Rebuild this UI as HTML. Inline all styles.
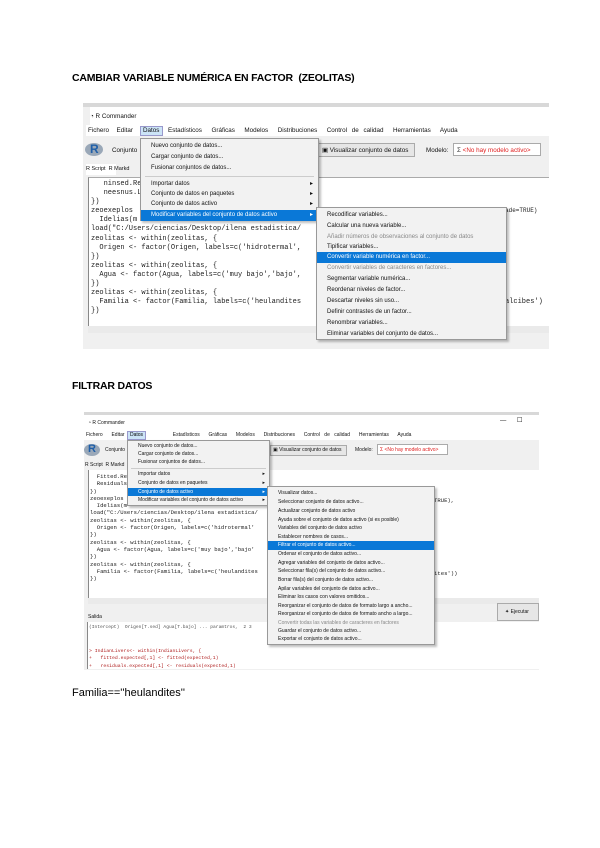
<!DOCTYPE html>
<html><head><meta charset="utf-8"><style>
*{margin:0;padding:0;box-sizing:border-box}
body{width:600px;height:848px;background:#fff;position:relative;overflow:hidden;font-family:"Liberation Sans",sans-serif;color:#000}
.a{position:absolute;white-space:nowrap}
.h{font-weight:bold;font-size:10.5px;letter-spacing:-0.2px}
.ui{font-size:6.3px;color:#111}
.mono{font-family:"Liberation Mono",monospace;font-size:7px;color:#222}
.menu{position:absolute;background:#f2f2f2;border:1px solid #999;box-shadow:2px 2px 2px rgba(0,0,0,.25)}
.menu div{position:absolute;left:0;right:0;height:10px;line-height:10px;padding-left:10px;font-size:6px;color:#111;white-space:nowrap}
.menu .sel{background:#0a78d7;color:#fff}
.menu .dis{color:#888}
.sep{height:1px!important;background:#ccc}
</style></head><body>

<div class="a h" style="left:72px;top:72px">CAMBIAR VARIABLE NUMÉRICA EN FACTOR&nbsp; (ZEOLITAS)</div>

<!-- screenshot 1 -->
<div class="a" style="left:83px;top:103px;width:466px;height:246px;background:#f0f0f0"></div>
<div class="a" style="left:83px;top:103px;width:466px;height:4px;background:#d8d8d8"></div>
<div class="a" style="left:90px;top:107px;width:459px;height:18px;background:#fff"></div>
<div class="a ui" style="left:90px;top:113px">◔ R Commander</div>
<div class="a" style="left:86px;top:125px;width:463px;height:11px;background:#fff"></div>
<div class="a ui" style="left:88px;top:127px;word-spacing:2px">Fichero&nbsp; Editar</div>
<div class="a" style="left:140px;top:126px;width:23px;height:10px;background:#cce4f7;border:1px solid #99c"></div>
<div class="a ui" style="left:143px;top:127px">Datos</div>
<div class="a ui" style="left:168px;top:127px;word-spacing:3px">Estadísticos&nbsp; Gráficas&nbsp; Modelos&nbsp; Distribuciones&nbsp; Control de calidad&nbsp; Herramientas&nbsp; Ayuda</div>
<div class="a" style="left:85px;top:143px;width:18px;height:13px;border-radius:50%;background:#9aa8b8"></div>
<div class="a" style="left:90px;top:142px;font-weight:bold;font-size:12px;color:#1f5fa8">R</div>
<div class="a ui" style="left:112px;top:147px">Conjunto</div>
<div class="a" style="left:318px;top:143px;width:97px;height:14px;background:#e6e6e6;border:1px solid #aaa"></div>
<div class="a ui" style="left:322px;top:147px">▣ Visualizar conjunto de datos</div>
<div class="a ui" style="left:426px;top:147px">Modelo:</div>
<div class="a" style="left:453px;top:143px;width:88px;height:13px;background:#fff;border:1px solid #aaa"></div>
<div class="a ui" style="left:457px;top:147px;color:#e02020"><span style="color:#333">Σ</span> &lt;No hay modelo activo&gt;</div>
<div class="a" style="left:86px;top:164px;width:30px;height:11px;background:#fff"></div>
<div class="a ui" style="left:86px;top:166px;font-size:5.5px">R Script&nbsp; R Markd</div>
<div class="a" style="left:88px;top:177px;width:461px;height:149px;background:#fff;border-left:1px solid #888;border-top:1px solid #aaa"></div>
<div class="a mono" style="left:91px;top:180px;line-height:9.1px">&nbsp; &nbsp;ninsed.Re<br>&nbsp; &nbsp;neesnus.La<br>})<br>zeoexeplos<br>&nbsp; Idelias(m<br>load("C:/Users/ciencias/Desktop/ilena estadistica/<br>zeolitas &lt;- within(zeolitas, {<br>&nbsp; Origen &lt;- factor(Origen, labels=c('hidrotermal',<br>})<br>zeolitas &lt;- within(zeolitas, {<br>&nbsp; Agua &lt;- factor(Agua, labels=c('muy bajo','bajo',<br>})<br>zeolitas &lt;- within(zeolitas, {<br>&nbsp; Familia &lt;- factor(Familia, labels=c('heulandites<br>})</div>
<div class="a mono" style="left:505px;top:207px;font-size:6px">ade=TRUE)</div>
<div class="a mono" style="left:505px;top:298px">alcibes')</div>
<div class="a" style="left:88px;top:326px;width:461px;height:7px;background:#eaeaea"></div>

<div class="menu" style="left:140px;top:138px;width:179px;height:83px">
<div style="top:2px">Nuevo conjunto de datos...</div>
<div style="top:13px">Cargar conjunto de datos...</div>
<div style="top:24px">Fusionar conjuntos de datos...</div>
<div class="sep" style="top:37px;left:4px;right:4px"></div>
<div style="top:40px">Importar datos<span style="position:absolute;right:5px">▸</span></div>
<div style="top:50px">Conjunto de datos en paquetes<span style="position:absolute;right:5px">▸</span></div>
<div style="top:60px">Conjunto de datos activo<span style="position:absolute;right:5px">▸</span></div>
<div class="sel" style="top:71px;height:11px">Modificar variables del conjunto de datos activo<span style="position:absolute;right:5px">▸</span></div>
</div>
<div class="menu" style="left:316px;top:207px;width:191px;height:133px">
<div style="top:2px">Recodificar variables...</div>
<div style="top:13px">Calcular una nueva variable...</div>
<div class="dis" style="top:24px">Añadir números de observaciones al conjunto de datos</div>
<div style="top:34px">Tipificar variables...</div>
<div class="sel" style="top:44px;height:11px">Convertir variable numérica en factor...</div>
<div class="dis" style="top:55px">Convertir variables de caracteres en factores...</div>
<div style="top:66px">Segmentar variable numérica...</div>
<div style="top:77px">Reordenar niveles de factor...</div>
<div style="top:88px">Descartar niveles sin uso...</div>
<div style="top:99px">Definir contrastes de un factor...</div>
<div style="top:110px">Renombrar variables...</div>
<div style="top:121px">Eliminar variables del conjunto de datos...</div>
</div>

<div class="a h" style="left:72px;top:380px">FILTRAR DATOS</div>

<!-- screenshot 2 -->
<div class="a" style="left:84px;top:412px;width:455px;height:258px;background:#f0f0f0"></div>
<div class="a" style="left:84px;top:412px;width:455px;height:3px;background:#d8d8d8"></div>
<div class="a" style="left:84px;top:415px;width:455px;height:16px;background:#fff"></div>
<div class="a ui" style="left:88px;top:420px;font-size:5px">◔ R Commander</div>
<div class="a ui" style="left:500px;top:417px">—&nbsp;&nbsp;&nbsp;&nbsp;&nbsp;&nbsp;☐</div>
<div class="a" style="left:84px;top:431px;width:455px;height:9px;background:#fff"></div>
<div class="a ui" style="left:86px;top:432px;font-size:5px;word-spacing:3px">Fichero&nbsp; Editar&nbsp;&nbsp;&nbsp;&nbsp;&nbsp;&nbsp;&nbsp;&nbsp;&nbsp;&nbsp; Estadísticos&nbsp; Gráficas&nbsp; Modelos&nbsp; Distribuciones&nbsp; Control de calidad&nbsp; Herramientas&nbsp; Ayuda</div>
<div class="a" style="left:127px;top:431px;width:19px;height:9px;background:#cce4f7;border:1px solid #99c;font-size:5px;padding-left:2px">Datos</div>
<div class="a" style="left:84px;top:444px;width:16px;height:12px;border-radius:50%;background:#9aa8b8"></div>
<div class="a" style="left:88px;top:443px;font-weight:bold;font-size:11px;color:#1f5fa8">R</div>
<div class="a ui" style="left:105px;top:447px;font-size:5px">Conjunto</div>
<div class="a" style="left:270px;top:445px;width:77px;height:11px;background:#e6e6e6;border:1px solid #aaa"></div>
<div class="a ui" style="left:273px;top:447px;font-size:5px">▣ Visualizar conjunto de datos</div>
<div class="a ui" style="left:355px;top:447px;font-size:5px">Modelo:</div>
<div class="a" style="left:377px;top:444px;width:71px;height:11px;background:#fff;border:1px solid #aaa"></div>
<div class="a ui" style="left:380px;top:447px;font-size:5px;color:#e02020">Σ &lt;No hay modelo activo&gt;</div>
<div class="a ui" style="left:85px;top:462px;font-size:5px">R Script&nbsp; R Markd</div>
<div class="a" style="left:88px;top:470px;width:451px;height:128px;background:#fff;border-left:1px solid #888"></div>
<div class="a mono" style="left:90px;top:473px;font-size:5.6px;line-height:7.3px">&nbsp; Fitted.Re<br>&nbsp; Residuals<br>})<br>zeoexeplos<br>&nbsp; Idelias(m<br>load("C:/Users/ciencias/Desktop/ilena estadistica/<br>zeolitas &lt;- within(zeolitas, {<br>&nbsp; Origen &lt;- factor(Origen, labels=c('hidrotermal'<br>})<br>zeolitas &lt;- within(zeolitas, {<br>&nbsp; Agua &lt;- factor(Agua, labels=c('muy bajo','bajo'<br>})<br>zeolitas &lt;- within(zeolitas, {<br>&nbsp; Familia &lt;- factor(Familia, labels=c('heulandites<br>})</div>
<div class="a mono" style="left:434px;top:497px;font-size:5.6px">TRUE),</div>
<div class="a mono" style="left:434px;top:570px;font-size:5.6px">ites'))</div>
<div class="a" style="left:88px;top:598px;width:451px;height:6px;background:#eaeaea"></div>
<div class="a ui" style="left:88px;top:614px;font-size:5px">Salida</div>
<div class="a" style="left:497px;top:603px;width:42px;height:18px;background:#e6e6e6;border:1px solid #aaa"></div>
<div class="a ui" style="left:505px;top:609px;font-size:5px">✦ Ejecutar</div>
<div class="a" style="left:87px;top:622px;width:452px;height:47px;background:#fff;border-left:1px solid #888"></div>
<div class="a mono" style="left:89px;top:625px;font-size:4.6px;color:#555">(Intercept)&nbsp; Origen[T.sed] Agua[T.bajo] ... paramtros,&nbsp; 2 3</div>
<div class="a mono" style="left:89px;top:648px;font-size:4.8px;line-height:7.3px;color:#b02020">&gt; IndianLivers&lt;- within(IndianLivers, {<br>+&nbsp;&nbsp; fitted.expected[,1] &lt;- fitted(expected,1)<br>+&nbsp;&nbsp; residuals.expected[,1] &lt;- residuals(expected,1)</div>

<div class="menu" style="left:127px;top:440px;width:143px;height:66px">
<div style="top:1px;font-size:5px;height:8px;line-height:8px">Nuevo conjunto de datos...</div>
<div style="top:9px;font-size:5px;height:8px;line-height:8px">Cargar conjunto de datos...</div>
<div style="top:17px;font-size:5px;height:8px;line-height:8px">Fusionar conjuntos de datos...</div>
<div class="sep" style="top:27px;left:3px;right:3px"></div>
<div style="top:29px;font-size:5px;height:8px;line-height:8px">Importar datos<span style="position:absolute;right:4px">▸</span></div>
<div style="top:38px;font-size:5px;height:8px;line-height:8px">Conjunto de datos en paquetes<span style="position:absolute;right:4px">▸</span></div>
<div class="sel" style="top:47px;font-size:5px;height:8px;line-height:8px">Conjunto de datos activo<span style="position:absolute;right:4px">▸</span></div>
<div style="top:55px;font-size:5px;height:8px;line-height:8px">Modificar variables del conjunto de datos activo<span style="position:absolute;right:4px">▸</span></div>
</div>
<div class="menu" style="left:267px;top:486px;width:168px;height:159px">
<div style="top:2px;font-size:5px;height:8px;line-height:8px">Visualizar datos...</div>
<div style="top:11px;font-size:5px;height:8px;line-height:8px">Seleccionar conjunto de datos activo...</div>
<div style="top:20px;font-size:5px;height:8px;line-height:8px">Actualizar conjunto de datos activo</div>
<div style="top:29px;font-size:5px;height:8px;line-height:8px">Ayuda sobre el conjunto de datos activo (si es posible)</div>
<div style="top:37px;font-size:5px;height:8px;line-height:8px">Variables del conjunto de datos activo</div>
<div style="top:46px;font-size:5px;height:8px;line-height:8px">Establecer nombres de casos...</div>
<div class="sel" style="top:54px;font-size:5px;height:9px;line-height:9px">Filtrar el conjunto de datos activo...</div>
<div style="top:63px;font-size:5px;height:8px;line-height:8px">Ordenar el conjunto de datos activo...</div>
<div style="top:72px;font-size:5px;height:8px;line-height:8px">Agregar variables del conjunto de datos activo...</div>
<div style="top:80px;font-size:5px;height:8px;line-height:8px">Seleccionar fila(s) del conjunto de datos activo...</div>
<div style="top:89px;font-size:5px;height:8px;line-height:8px">Borrar fila(s) del conjunto de datos activo...</div>
<div style="top:98px;font-size:5px;height:8px;line-height:8px">Apilar variables del conjunto de datos activo...</div>
<div style="top:106px;font-size:5px;height:8px;line-height:8px">Eliminar los casos con valores omitidos...</div>
<div style="top:115px;font-size:5px;height:8px;line-height:8px">Reorganizar el conjunto de datos de formato largo a ancho...</div>
<div style="top:123px;font-size:5px;height:8px;line-height:8px">Reorganizar el conjunto de datos de formato ancho a largo...</div>
<div class="dis" style="top:132px;font-size:5px;height:8px;line-height:8px">Convertir todas las variables de caracteres en factores</div>
<div style="top:140px;font-size:5px;height:8px;line-height:8px">Guardar el conjunto de datos activo...</div>
<div style="top:148px;font-size:5px;height:8px;line-height:8px">Exportar el conjunto de datos activo...</div>
</div>

<div class="a" style="left:72px;top:687px;font-size:11px">Familia==''heulandites''</div>
</body></html>
